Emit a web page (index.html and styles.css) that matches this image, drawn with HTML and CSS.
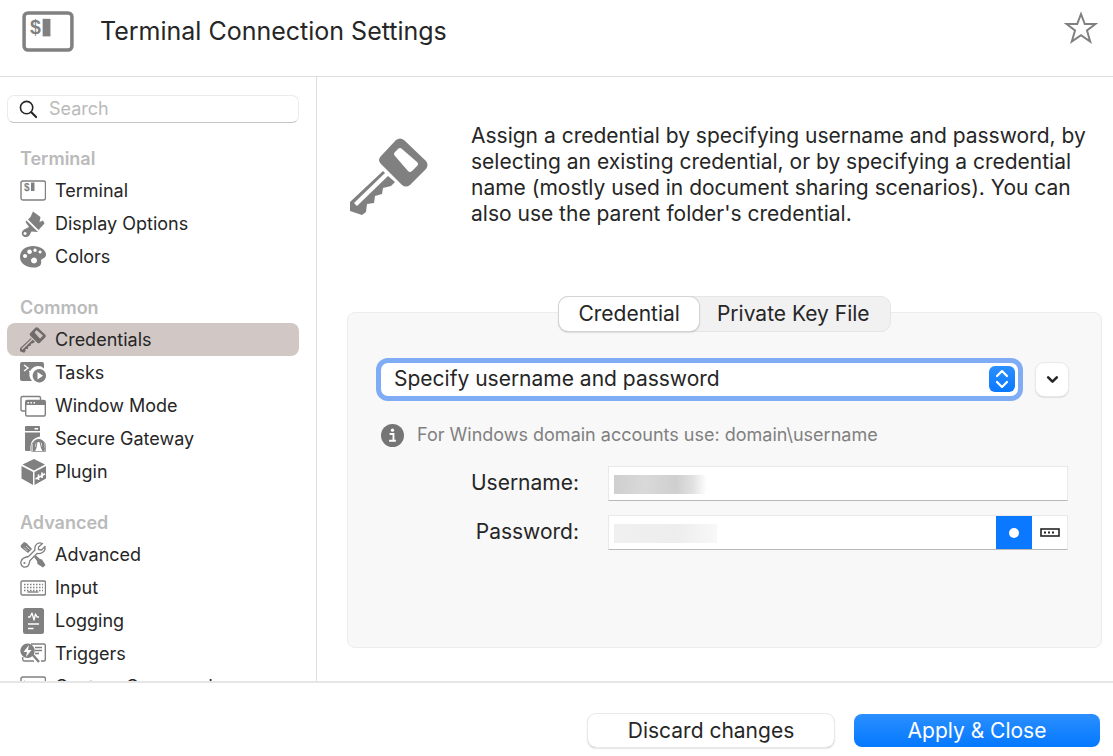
FILE: index.html
```html
<!DOCTYPE html>
<html lang="en">
<head>
<meta charset="utf-8">
<meta name="viewport" content="width=device-width, initial-scale=1">
<title>Terminal Connection Settings</title>
<link rel="stylesheet" href="styles.css">
</head>
<body>
<svg class="sprite" aria-hidden="true">
  <symbol id="i-key" viewBox="0 0 78 78">
    <path fill="currentColor" fill-rule="evenodd" d="M46 2Q50-1 54 2L76 23Q79 27 76 31L60 47Q56 50 52 47L31 26Q27 22 31 18ZM52 11Q50 9 48 11L45 14Q43 16 45 18L58 33Q60 35 62 33L67 28Q69 26 67 24Z"/>
    <path fill="currentColor" d="M33 33L35 35L4 65L7 68L38 38L45 44L41 48L33 50L32 56L25 58L24 65L17 66L16 74L12 77L0 73V64Z"/>
  </symbol>
  <symbol id="i-brush" viewBox="0 0 26 26">
    <path fill="currentColor" d="M13 .5L20.500 6 19.500 11 23 9.500 24.500 12.500 18.500 19 8 8.500 10.500 6Z"/>
    <path fill="currentColor" fill-rule="evenodd" d="M6.500 9.500L18 21 11.500 20.500 9 25Q5 27.500 2.500 24.500 .5 21 4 18.500L9 16 5.500 11ZM5 21a1.500 1.500 0 1 0 .1 0Z"/>
  </symbol>
  <symbol id="i-palette" viewBox="0 0 26 26">
    <path fill="currentColor" fill-rule="evenodd" d="M13 2C20 2 26 6 26 10.500 26 15 21 14 21 17 22 20 20 24 13 23.500 5 23 0 19 0 13 0 6 6 2 13 2ZM9.500 5.500a2.300 2.300 0 1 0 .1 0ZM15 4.500a1.700 1.700 0 1 0 .1 0ZM20 6.500a1.500 1.500 0 1 0 .1 0ZM5 10a2 2 0 1 0 .1 0ZM14 13.500a3 3 0 1 0 .1 0Z"/>
  </symbol>
  <symbol id="i-tasks" viewBox="0 0 26 26">
    <path fill="currentColor" d="M2 2H22Q24 2 24 4V8.500A8 8 0 0 0 12 21H2Q0 21 0 19V4Q0 2 2 2Z"/>
    <path fill="none" stroke="#fff" stroke-width="1.400" d="M4 5L8 8 4 11M9 11.500h4"/>
    <path fill="currentColor" fill-rule="evenodd" d="M19.300 9a6.700 6.700 0 1 0 .1 0ZM17.500 12V19.500L23 15.700Z"/>
  </symbol>
  <symbol id="i-windows" viewBox="0 0 26 26">
    <path fill="none" stroke="currentColor" stroke-width="1.400" d="M5 18H2.500Q1 18 1 16.500V5Q1 3.500 2.500 3.500H19Q20.500 3.500 20.500 5V7M7 7.500H24Q25.300 7.500 25.300 9V21.500Q25.300 23 24 23H7Q5.700 23 5.700 21.500V9Q5.700 7.500 7 7.500Z"/>
    <path fill="currentColor" d="M6 8H25V12H6Z"/>
    <path fill="#fff" d="M7.500 9h1.500v1.500h-1.500zM10.500 9H12v1.500h-1.500zM13.500 9H15v1.500h-1.500z"/>
  </symbol>
  <symbol id="i-gateway" viewBox="0 0 26 26">
    <path fill="currentColor" fill-rule="evenodd" d="M6 0H19Q20 0 20 1V5H5V1Q5 0 6 0ZM14.500 2V3.500H18V2ZM5 6.500H20V10.500Q11 12 10.500 20V25H6Q5 25 5 24Z"/>
    <path fill="none" stroke="currentColor" stroke-width=".8" d="M11.800 25.600V19.300A7 7 0 0 1 25.600 19.300V25.600Z"/>
    <path fill="none" stroke="currentColor" stroke-width="2.600" d="M14 24V19.300a4.700 4.700 0 0 1 9.400 0V24"/>
    <path fill="currentColor" d="M13 25V22L15.500 21 16.500 16H17.500L16.500 22 15 25ZM24.500 25V22L22 21 20.500 16H19.500L21 22 22.500 25Z"/>
  </symbol>
  <symbol id="i-plugin" viewBox="0 0 26 26">
    <path fill="currentColor" fill-rule="evenodd" d="M14 0L25 5.500 14 11.500 2.500 5.500ZM1.500 7L13 13V26L1.500 19.500ZM14.500 13L26 7V19.500L14.500 26Z"/>
    <path fill="none" stroke="#fff" stroke-width="1.700" d="M15.500 20L19.500 17.800M18.500 15.500V21M22 13.500V19M21.500 16.800L25 14.800M18.500 18.500L22 16.500"/>
  </symbol>
  <symbol id="i-tools" viewBox="0 0 26 26">
    <path fill="currentColor" d="M.5 3.500L4 0 6.500 1 12 7 8 11 1 5.500ZM14 15L16 13.500 20 17 22 17.500 25.500 23 23 25.500 17.500 22 17 19Z"/>
    <path stroke="#fff" stroke-width=".7" d="M4 5.500L7.500 9M6 4L9.500 7.500"/>
    <path fill="none" stroke="currentColor" stroke-width="1.300" stroke-linejoin="round" d="M22.500 1.500Q18-.5 15.500 3.500 14.500 6 15 8L8.500 14.500Q2 15.500 1 19.500 0 23 3.500 25 8 25.500 9 22L10 18.500 17 11.500Q23 12 25 7.500L25 4.500 21.500 8 18.500 7.500 18.500 5Z"/>
    <circle cx="4.500" cy="21" r="1.100" fill="currentColor"/>
  </symbol>
  <symbol id="i-keyboard" viewBox="0 0 26 26">
    <rect x="1" y="6" width="24.500" height="14" rx="1.500" fill="none" stroke="currentColor" stroke-width="1.400"/>
    <path fill="none" stroke="currentColor" stroke-width="1.500" stroke-dasharray="1.500 1.500" d="M4 9.500H23M4 12.500H23M4 15.500H23"/>
    <path stroke="currentColor" stroke-width="1.400" d="M7.500 17H18.500"/>
  </symbol>
  <symbol id="i-log" viewBox="0 0 26 26">
    <rect x="3" y="0" width="21" height="26" rx="2.500" fill="currentColor"/>
    <path fill="none" stroke="#fff" stroke-width="1.300" stroke-linejoin="round" d="M8 9H10L12 5 14 12 15.500 6 17 9H19M8 16H19M8 20.500H13.500"/>
  </symbol>
  <symbol id="i-trigger" viewBox="0 0 26 26">
    <path fill="none" stroke="currentColor" stroke-width="1.400" d="M11 3H24Q25.300 3 25.300 4.500V18.500Q25.300 20 24 20H21M14 20H4Q2.700 20 2.700 18V16M15 6.500H22M15 9.500H22M15 12.500H19"/>
    <path stroke="currentColor" stroke-width="2.400" d="M12 13L19 21"/>
    <path fill="currentColor" fill-rule="evenodd" d="M7.500 2.500a7.200 7.200 0 1 0 .1 0ZM9 4L3.500 11H7L6 16 11.500 9H8Z"/>
  </symbol>
  <symbol id="i-command" viewBox="0 0 26 26">
    <rect x="1" y="3" width="24.500" height="19" rx="2" fill="none" stroke="currentColor" stroke-width="1.400"/>
    <path fill="none" stroke="currentColor" stroke-width="1.400" d="M4 7L7 9 4 11M13 8.500H22M13 12H22"/>
  </symbol>
</svg>

<div class="window">
  <header class="titlebar">
    <svg class="title-icon" viewBox="0 0 53 42" aria-hidden="true">
      <rect x="2" y="2" width="49" height="38" rx="4" fill="none" stroke="currentColor" stroke-width="3.600"/>
      <text x="8" y="24" class="dollar dollar-large">$</text>
      <path fill="currentColor" d="M21 8h8v18h-8z"/>
    </svg>
    <h1>Terminal Connection Settings</h1>
    <button class="star" type="button" aria-label="Add to favorites">
      <svg viewBox="0 0 34 34" aria-hidden="true"><path fill="none" stroke="currentColor" stroke-width="2" d="M17 3L20.800 13H31.500L23 19.500 26.200 30.500 17 24.200 7.800 30.500 11 19.500 2.500 13H13.200Z"/></svg>
    </button>
  </header>

  <div class="body">
    <aside class="sidebar">
      <label class="search">
        <svg viewBox="0 0 20 20" aria-hidden="true"><circle cx="8" cy="8" r="6.500" fill="none" stroke="currentColor" stroke-width="1.700"/><path stroke="currentColor" stroke-width="2.200" stroke-linecap="round" d="M13 13L18 18"/></svg>
        <input type="search" placeholder="Search" aria-label="Search">
      </label>
      <nav>
        <h2>Terminal</h2>
        <ul>
          <li><a href="#terminal"><svg viewBox="0 0 26 26" aria-hidden="true"><rect x="1" y="3" width="24.500" height="19" rx="2" fill="none" stroke="currentColor" stroke-width="1.400"/><text x="4" y="13" class="dollar">$</text><path fill="currentColor" d="M11 4.500h3.500v8.500h-3.500z"/></svg>Terminal</a></li>
          <li><a href="#display"><svg><use href="#i-brush"/></svg>Display Options</a></li>
          <li><a href="#colors"><svg><use href="#i-palette"/></svg>Colors</a></li>
        </ul>
        <h2>Common</h2>
        <ul>
          <li><a href="#credentials" class="selected" aria-current="page"><svg><use href="#i-key"/></svg>Credentials</a></li>
          <li><a href="#tasks"><svg><use href="#i-tasks"/></svg>Tasks</a></li>
          <li><a href="#window"><svg><use href="#i-windows"/></svg>Window Mode</a></li>
          <li><a href="#gateway"><svg><use href="#i-gateway"/></svg>Secure Gateway</a></li>
          <li><a href="#plugin"><svg><use href="#i-plugin"/></svg>Plugin</a></li>
        </ul>
        <h2>Advanced</h2>
        <ul>
          <li><a href="#advanced"><svg><use href="#i-tools"/></svg>Advanced</a></li>
          <li><a href="#input"><svg><use href="#i-keyboard"/></svg>Input</a></li>
          <li><a href="#logging"><svg><use href="#i-log"/></svg>Logging</a></li>
          <li><a href="#triggers"><svg><use href="#i-trigger"/></svg>Triggers</a></li>
          <li><a href="#commands"><svg><use href="#i-command"/></svg>Custom Commands</a></li>
        </ul>
      </nav>
    </aside>

    <main class="content">
      <section class="intro">
        <svg class="intro-icon" aria-hidden="true"><use href="#i-key"/></svg>
        <p>Assign a credential by specifying username and password, by selecting an existing credential, or by specifying a credential name (mostly used in document sharing scenarios). You can also use the parent folder's credential.</p>
      </section>

      <section class="settings">
        <div class="tabs" role="tablist">
          <button type="button" role="tab" class="tab active" aria-selected="true">Credential</button>
          <button type="button" role="tab" class="tab" aria-selected="false">Private Key File</button>
        </div>
        <form class="panel">
          <div class="mode">
            <div class="picker">
              <select aria-label="Credential mode"><option>Specify username and password</option></select>
              <svg viewBox="0 0 26 26" aria-hidden="true"><path fill="none" stroke="currentColor" stroke-width="2.200" stroke-linecap="round" stroke-linejoin="round" d="M8 10L13 5 18 10M8 16L13 21 18 16"/></svg>
            </div>
            <button class="more" type="button" aria-label="More options">
              <svg viewBox="0 0 12 8" aria-hidden="true"><path fill="none" stroke="currentColor" stroke-width="2.400" stroke-linecap="round" stroke-linejoin="round" d="M2 2L6 6 10 2"/></svg>
            </button>
          </div>
          <p class="hint">
            <svg viewBox="0 0 24 24" aria-hidden="true"><circle cx="12" cy="12" r="12" fill="currentColor"/><circle cx="12" cy="6.500" r="1.700" fill="#fff"/><path fill="none" stroke="#fff" stroke-width="2" d="M9 10.500H13V17M8.500 17.500H15.500"/></svg>
            For Windows domain accounts use: domain\username
          </p>
          <div class="fields">
            <label for="username">Username:</label>
            <div class="field">
              <input id="username" type="text">
              <span class="smudge smudge-dark"></span>
            </div>
            <label for="password">Password:</label>
            <div class="field">
              <input id="password" type="password">
              <span class="smudge smudge-light"></span>
              <button class="reveal" type="button" aria-label="Show password"><svg viewBox="0 0 10 10" aria-hidden="true"><circle cx="5" cy="5" r="5" fill="currentColor"/></svg></button>
              <button class="generate" type="button" aria-label="Generate password"><svg viewBox="0 0 20 9" aria-hidden="true"><rect x="1" y="1" width="18" height="7" fill="none" stroke="currentColor" stroke-width="1.600"/><path fill="currentColor" d="M4 3.500h2v2H4zM8 3.500h2v2H8zM12 3.500h2v2h-2z"/></svg></button>
            </div>
          </div>
        </form>
      </section>
    </main>
  </div>

  <footer class="actions">
    <button type="button" class="discard">Discard changes</button>
    <button type="button" class="apply">Apply &amp; Close</button>
  </footer>
</div>
</body>
</html>
```
FILE: styles.css
```css
* {
  box-sizing: border-box;
}

body {
  margin: 0;
  background: #fff;
  color: #262626;
  font-family: Inter, "Liberation Sans", sans-serif;
  font-size: 21px;
}

button,
input,
select {
  margin: 0;
  border: 0;
  padding: 0;
  background: none;
  color: inherit;
  font: inherit;
}

h1,
h2,
p,
ul {
  margin: 0;
  padding: 0;
}

.sprite {
  position: absolute;
  width: 0;
  height: 0;
}

.dollar {
  fill: currentColor;
  font: bold 10px "Liberation Sans", sans-serif;
}

.dollar-large {
  font-size: 20px;
}

.window {
  display: flex;
  flex-direction: column;
  height: 100vh;
}

/* Title bar */

.titlebar {
  display: flex;
  flex: none;
  align-items: flex-start;
  gap: 26px;
  padding: 11px 15px 24px 22px;
  border-bottom: 1px solid #dedede;
}

.title-icon {
  flex: none;
  width: 52px;
  height: 41px;
  color: #808080;
}

.titlebar h1 {
  flex: 1;
  font-size: 25px;
  font-weight: 400;
  line-height: 40px;
}

.star {
  width: 34px;
  height: 34px;
  color: #808080;
}

.star svg {
  display: block;
}

.body {
  display: flex;
  flex: 1;
  min-height: 0;
}

/* Sidebar */

.sidebar {
  flex: none;
  width: 317px;
  padding: 18px 17px 0 7px;
  overflow: hidden;
  border-right: 1px solid #dedede;
  font-size: 18px;
}

.search {
  display: flex;
  align-items: center;
  gap: 11px;
  height: 28px;
  margin-bottom: 1px;
  padding: 0 11px;
  border: 1px solid #ebebeb;
  border-bottom-color: #c4c4c4;
  border-radius: 7px;
}

.search svg {
  flex: none;
  width: 19px;
  height: 19px;
}

.search input {
  flex: 1;
  min-width: 0;
  padding-bottom: 1px;
  outline: 0;
}

.search input::placeholder {
  color: #bababa;
  opacity: 1;
}

.sidebar h2 {
  padding: 22px 13px 3px;
  color: #bababa;
  font-size: 18px;
  font-weight: 600;
  line-height: 25px;
}

.sidebar ul {
  list-style: none;
}

.sidebar a {
  display: flex;
  align-items: center;
  gap: 9px;
  height: 33px;
  padding: 0 13px;
  border-radius: 8px;
  color: inherit;
  text-decoration: none;
}

.sidebar a svg {
  flex: none;
  width: 26px;
  height: 26px;
  color: #808080;
}

.sidebar .selected {
  background: #d1c8c5;
}

.sidebar .selected svg {
  color: #706b6a;
}

/* Main content */

.content {
  display: flex;
  flex: 1;
  flex-direction: column;
  gap: 69px;
  min-width: 0;
  padding: 46px 11px 33px 30px;
}

.intro {
  display: flex;
  gap: 43px;
  padding: 0 10px 0 3px;
}

.intro-icon {
  flex: none;
  width: 78px;
  height: 78px;
  margin-top: 15px;
  color: #808080;
}

.intro p {
  line-height: 26px;
}

.settings {
  display: flex;
  flex: 1;
  flex-direction: column;
}

.tabs {
  z-index: 1;
  display: flex;
  align-self: center;
  margin-bottom: -20px;
  border: 1px solid #e6e6e6;
  border-radius: 10px;
  background: #f1f1f1;
}

.tab {
  height: 34px;
  padding: 0 20px 1px 18px;
  border-radius: 9px;
}

.tab.active {
  padding: 0 19px 1px;
  background: #fff;
  box-shadow: 0 0 0 1px #d4d4d4, 0 1px 2px #999;
}

.panel {
  display: flex;
  flex: 1;
  flex-direction: column;
  padding: 50px 33px 0;
  border: 1px solid #ececec;
  border-radius: 8px;
  background: #f8f8f8;
}

.mode {
  display: flex;
  align-items: center;
  gap: 18px;
}

.picker {
  position: relative;
  flex: 1;
  border-radius: 7px;
  background: #fff;
  box-shadow: 0 0 0 5px #80abf5;
}

.picker select {
  display: block;
  width: 100%;
  height: 33px;
  padding: 0 40px 2px 13px;
  outline: 0;
  appearance: none;
}

.picker svg {
  position: absolute;
  top: 3px;
  right: 3px;
  width: 26px;
  height: 26px;
  border-radius: 6px;
  background: linear-gradient(#2b8fff, #0a78ff);
  color: #fff;
  pointer-events: none;
}

.more {
  display: grid;
  place-items: center;
  width: 32px;
  height: 33px;
  border-radius: 8px;
  background: #fff;
  box-shadow: 0 0 0 1px #e9e9e9, 0 1px 2px #aaa;
}

.more svg {
  width: 13px;
  height: 9px;
}

.hint {
  display: flex;
  align-items: center;
  gap: 13px;
  margin-top: 26px;
  color: #808080;
  font-size: 18px;
  line-height: 26px;
}

.hint svg {
  flex: none;
  width: 23px;
  height: 23px;
  color: #757575;
}

.fields {
  display: grid;
  grid-template-columns: 198px 1fr;
  align-items: center;
  gap: 14px 29px;
  margin-top: 18px;
}

.fields label {
  padding-bottom: 2px;
  text-align: right;
}

.field {
  position: relative;
  display: flex;
  height: 35px;
  border: 1px solid #e9e9e9;
  border-bottom-color: #b8b8b8;
  background: #fff;
}

.field input {
  flex: 1;
  min-width: 0;
  padding: 0 6px;
  outline: 0;
}

.smudge {
  position: absolute;
  top: 8px;
  left: 5px;
  width: 103px;
  height: 19px;
  pointer-events: none;
}

.smudge-dark {
  background: linear-gradient(90deg, #cfcfcf, #d9d9d9 30%, #cfcfcf 60%, #e0e0e0 76%, #fff 90%);
}

.smudge-light {
  background: linear-gradient(90deg, #f0f0f0, #ededed 60%, #f8f8f8);
}

.reveal,
.generate {
  display: grid;
  place-items: center;
  width: 36px;
}

.reveal {
  background: #0a78ff;
  color: #fff;
}

.reveal svg {
  width: 10px;
  height: 10px;
}

.generate {
  width: 35px;
}

.generate svg {
  width: 20px;
  height: 9px;
}

/* Footer */

.actions {
  display: flex;
  flex: none;
  justify-content: flex-end;
  gap: 20px;
  padding: 31px 13px 9px;
  border-top: 2px solid #e6e6e6;
}

.actions button {
  width: 246px;
  height: 33px;
  padding-bottom: 1px;
  border-radius: 8px;
}

.discard {
  box-shadow: 0 0 0 1px #e9e9e9, 0 1px 2px #aaa;
}

.apply {
  background: linear-gradient(#2b8fff, #0478ff);
  color: #fff;
}
```
